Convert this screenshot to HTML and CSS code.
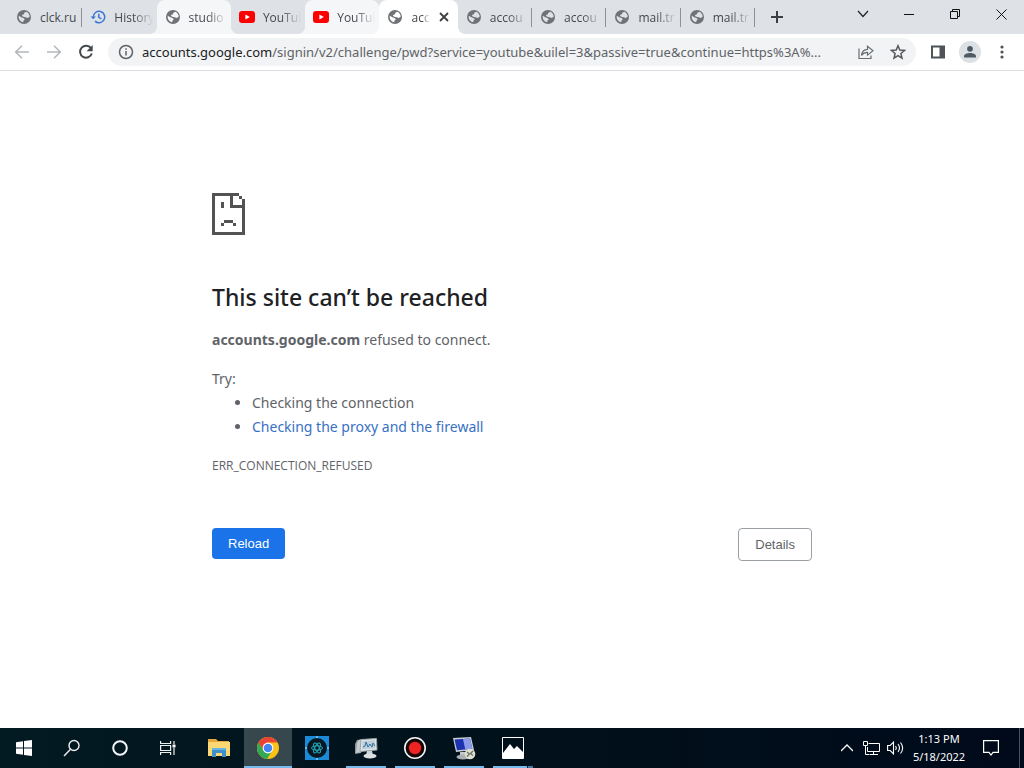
FILE: index.html
```
<!doctype html>
<html lang="en">
<head>
	<meta charset="UTF-8">
	<title>accounts.google.com</title>
	<link rel="stylesheet" href="styles.css">
</head>
<body>
	<!-- shared icons -->
	<svg class="defs" width="0" height="0">
		<symbol id="globe" viewBox="0 0 24 24">
			<path fill="#6f7276" d="M12 1.500a10.500 10.500 0 1 0 0 21 10.500 10.500 0 0 0 0-21zM11 19.930c-3.950-.490-7-3.850-7-7.930 0-.620.080-1.210.210-1.790L8 12.500l4 1.500 1 2-2 1.800zM17.500 13.500l-3-1-2.500-.5-3-1.500.5-2 2.500-.5.5-2.500 3-1.400c2.930 1.190 5 4.060 5 7.400z"/>
		</symbol>
		<symbol id="youtube" viewBox="0 0 16 16">
			<rect x="0" y="2" width="16" height="12" rx="3" fill="#f00"/>
			<path fill="#fff" d="M6.400 5.400v5.200l4.500-2.600z"/>
		</symbol>
	</svg>

	<header class="browser">
		<div class="top">
			<nav class="tabs">
				<a class="tab" href="#"><svg class="fav"><use href="#globe"/></svg><span>clck.ru</span></a>
				<a class="tab no-line" href="#">
					<svg class="fav" viewBox="0 0 16 16" fill="none" stroke="#3b78d8" stroke-width="1.500"><path d="M3.300 8a5.700 5.700 0 1 1 1.700 4.100M8.800 4.800v3.600l2.600 1.500"/><path fill="#3b78d8" stroke="none" d="M.5 7.400h5.400L3.200 10.300z"/></svg>
					<span>History</span>
				</a>
				<a class="tab picked" href="#"><svg class="fav"><use href="#globe"/></svg><span>studio</span></a>
				<a class="tab no-line" href="#"><svg class="fav"><use href="#youtube"/></svg><span>YouTub</span></a>
				<a class="tab picked" href="#"><svg class="fav"><use href="#youtube"/></svg><span>YouTub</span></a>
				<div class="tab current">
					<svg class="fav"><use href="#globe"/></svg><span>acc</span>
					<button class="close" aria-label="Close tab"><svg width="10" height="10" viewBox="0 0 10 10" stroke="#3c4043" stroke-width="1.800"><path d="M1 1l8 8M9 1L1 9"/></svg></button>
				</div>
				<a class="tab" href="#"><svg class="fav"><use href="#globe"/></svg><span>accou</span></a>
				<a class="tab" href="#"><svg class="fav"><use href="#globe"/></svg><span>accou</span></a>
				<a class="tab" href="#"><svg class="fav"><use href="#globe"/></svg><span>mail.tr</span></a>
				<a class="tab" href="#"><svg class="fav"><use href="#globe"/></svg><span>mail.tr</span></a>
			</nav>
			<button class="new-tab" aria-label="New tab"><svg width="12" height="12" viewBox="0 0 12 12" stroke="#3c4043" stroke-width="2"><path d="M6 0v12M0 6h12"/></svg></button>
			<div class="controls">
				<button aria-label="Search tabs"><svg width="12" height="12" viewBox="0 0 12 12" fill="none" stroke="#222" stroke-width="1.200"><path d="M1 3l5 5.500L11 3"/></svg></button>
				<button aria-label="Minimize"><svg width="10" height="10" viewBox="0 0 10 10"><path fill="#111" d="M0 5h10v1H0z"/></svg></button>
				<button aria-label="Restore"><svg width="10" height="10" viewBox="0 0 10 10" fill="none" stroke="#111"><path d="M.5 2.500h7v7h-7zM2.500 2.500v-2h7v7h-2"/></svg></button>
				<button aria-label="Close"><svg width="11" height="11" viewBox="0 0 11 11" stroke="#111"><path d="M.5.5l10 10M10.500.5l-10 10"/></svg></button>
			</div>
		</div>

		<div class="toolbar">
			<button aria-label="Back"><svg width="16" height="16" viewBox="0 0 16 16" fill="none" stroke="#b5b8bb" stroke-width="1.600"><path d="M15 8H2M8 1.700 1.700 8 8 14.300"/></svg></button>
			<button aria-label="Forward"><svg width="16" height="16" viewBox="0 0 16 16" fill="none" stroke="#b5b8bb" stroke-width="1.600"><path d="M1 8h13M8 1.700 14.300 8 8 14.300"/></svg></button>
			<button aria-label="Reload page"><svg width="16" height="16" viewBox="0 0 16 16" fill="none" stroke="#45494d" stroke-width="2"><path d="M13 4.200A6 6 0 1 0 13.800 9.500"/><path fill="#45494d" stroke="none" d="M14.700 1v6.200H8.500z"/></svg></button>
			<div class="address">
				<svg width="16" height="16" viewBox="0 0 16 16" fill="none" stroke="#5f6368" stroke-width="1.500"><circle cx="8" cy="8" r="6.500"/><path d="M8 7v4.600M8 4.300v1.500"/></svg>
				<div class="url"><b>accounts.google.com</b>/signin/v2/challenge/pwd?service=youtube&amp;uilel=3&amp;passive=true&amp;continue=https%3A%...</div>
				<button aria-label="Share"><svg width="16" height="16" viewBox="0 0 16 16" fill="none" stroke="#6a6e73" stroke-width="1.200"><path d="M1 4.500v10h12v-3M3.500 11.500c.4-4 2.600-6 6-6.200V2.200L15 6.700l-5.500 4.400V8.300c-2.600 0-4.400.8-6 3.200z"/></svg></button>
				<button aria-label="Bookmark"><svg width="16" height="16" viewBox="0 0 16 16" fill="none" stroke="#55595e" stroke-width="1.500"><path d="M8 1.800l1.800 4.300 4.700.4-3.600 3 1.100 4.600L8 11.700l-4 2.400 1.100-4.600-3.600-3 4.700-.4z"/></svg></button>
			</div>
			<button aria-label="Side panel"><svg width="16" height="16" viewBox="0 0 16 16"><path fill="#505357" d="M1 1.500h14v13H1zM3 3.500v9h6.500v-9z" fill-rule="evenodd"/></svg></button>
			<button aria-label="Profile"><svg width="22" height="22" viewBox="0 0 22 22"><circle cx="11" cy="11" r="11" fill="#dce1e6"/><circle cx="11" cy="7.800" r="2.900" fill="#4d5963"/><path fill="#4d5963" d="M5 16.500v-1.300c0-2.200 3.500-3.300 6-3.300s6 1.100 6 3.300v1.300z"/></svg></button>
			<button aria-label="Menu"><svg width="16" height="16" viewBox="0 0 16 16" fill="#505357"><circle cx="8" cy="3" r="1.600"/><circle cx="8" cy="8" r="1.600"/><circle cx="8" cy="13" r="1.600"/></svg></button>
		</div>
	</header>

	<main class="error">
		<svg class="sad" width="33" height="42" viewBox="0 0 11 14" fill="#535353" shape-rendering="crispEdges">
			<path d="M0 0h9v1H7v3h4v10H0zM1 1v12h9V5H6V1zM9 1h1v1H9zM10 2h1v2h-1zM3 3h1v2H3zM4 9h3v1H4zM3 10h1v1H3zM7 10h1v1H7z" fill-rule="evenodd"/>
		</svg>
		<h1>This site can’t be reached</h1>
		<p><strong>accounts.google.com</strong> refused to connect.</p>
		<div class="suggest">
			<p>Try:</p>
			<ul>
				<li>Checking the connection</li>
				<li><a href="#">Checking the proxy and the firewall</a></li>
			</ul>
		</div>
		<div class="code">ERR_CONNECTION_REFUSED</div>
		<div class="actions">
			<button class="reload">Reload</button>
			<button class="details">Details</button>
		</div>
	</main>

	<footer class="taskbar">
		<div class="system">
			<button aria-label="Start"><svg width="16" height="16" viewBox="0 0 16 16" fill="#fff"><path d="M0 2.200 7 1.200v6.300H0zM8 1l8-1v7.500H8zM0 8.500h7v6.300l-7-1zM8 8.500h8V16l-8-1z"/></svg></button>
			<button aria-label="Search"><svg width="18" height="18" viewBox="0 0 18 18" fill="none" stroke="#eee" stroke-width="1.400"><circle cx="11" cy="6.500" r="5"/><path d="M7.500 10.200 1 17"/></svg></button>
			<button aria-label="Cortana"><svg width="18" height="18" viewBox="0 0 18 18" fill="none" stroke="#f2f6f7" stroke-width="2"><circle cx="9" cy="9" r="6.800"/></svg></button>
			<button aria-label="Task view"><svg width="16" height="16" viewBox="0 0 16 16" fill="none" stroke="#eee" stroke-width="1.200"><path d="M.6 1v2.500h10V1M.6 15v-2.500h10V15M.6 5.500h10v5H.6zM14 1v3M14 8v7"/><path fill="#fff" stroke="none" d="M12.500 4.500h3v3h-3z"/></svg></button>
		</div>
		<div class="apps">
			<button aria-label="File Explorer"><svg width="22" height="20" viewBox="0 0 22 20"><path fill="#e3a93c" d="M0 1h8l2 2h11v5H0z"/><path fill="#fbd873" d="M0 4h22v14H0z"/><path fill="#3f8fcb" d="M4 10h14v9h-4v-4H8v4H4z"/><path fill="#64b5e6" d="M4 10h14v2H4z"/></svg></button>
			<button class="open front" aria-label="Google Chrome"><svg width="24" height="24" viewBox="0 0 24 24"><circle cx="12" cy="12" r="11" fill="#fbc116"/><path fill="#34a853" d="M2.500 6.500A11 11 0 0 0 11 23l5.300-8.500L12 17l-4.300-2.500z"/><path fill="#ea4335" d="M2.500 6.500a11 11 0 0 1 19 0H12L7.700 14.500z"/><circle cx="12" cy="12" r="5.400" fill="#fff"/><circle cx="12" cy="12" r="4.300" fill="#4285f4"/></svg></button>
			<button aria-label="Atom"><svg width="24" height="24" viewBox="0 0 24 24"><path fill="#1b8bd8" d="M0 0h24v24H0z"/><path stroke="#c5e8fa" d="M12 0v24M0 12h24"/><circle cx="12" cy="12" r="10" fill="#071822"/><g fill="none" stroke="#27a5b5"><ellipse cx="12" cy="12" rx="5.500" ry="2.200"/><ellipse cx="12" cy="12" rx="5.500" ry="2.200" transform="rotate(60 12 12)"/><ellipse cx="12" cy="12" rx="5.500" ry="2.200" transform="rotate(120 12 12)"/></g></svg></button>
			<button class="open" aria-label="Monitor"><svg width="24" height="24" viewBox="0 0 24 24"><path fill="#8d9799" d="M1 8 3 4l6-1-2 14-6 1z"/><path fill="#c3cccf" d="M3 7 5 4l4-1-1 13-6 1z"/><path fill="#e3e9eb" stroke="#98a2a5" d="M7 3.500 22.500 2.500 23 14 6 15.500z"/><path fill="#bccfdb" d="M8.500 5 21 4.200l.4 8.300L8 13.500z"/><path fill="none" stroke="#346f9c" d="M9 11l2-1 1-4 2 5 2-3 2 3 1-4 2 3"/><path fill="#ced5d7" d="M13 15h5l1 4h-7z"/><ellipse cx="16" cy="20" rx="6.500" ry="2.500" fill="#dce0e1"/></svg></button>
			<button class="open" aria-label="Recorder"><svg width="24" height="24" viewBox="0 0 24 24"><circle cx="12" cy="12" r="10.200" fill="#170607" stroke="#f5f5f5" stroke-width="1.600"/><circle cx="12" cy="12" r="6.200" fill="#f02323"/></svg></button>
			<button class="open" aria-label="Remote Desktop"><svg width="24" height="24" viewBox="0 0 24 24"><path fill="#c8cdd2" d="M1 2l18-1 3 13L4 16z"/><path fill="#1d32ae" d="M2.500 3.500 18 2.500l2.300 10.300L5 14.300z"/><path fill="#8e9bea" d="M11 3l7-.5 2.300 10.300-7 .7z"/><path fill="#c5cacb" d="M8 16h6v4H8z"/><ellipse cx="11" cy="21" rx="6.500" ry="2.500" fill="#a9b0b3"/><circle cx="18" cy="18" r="5.300" fill="#dfdfd0"/><path fill="none" stroke="#69736a" stroke-width="1.300" d="M15 16l2.500 2-2.500 2.500M21 15l-2.500 2.500 2.500 2"/></svg></button>
			<button class="open several" aria-label="Photos"><svg width="22" height="22" viewBox="0 0 22 22"><path fill="none" stroke="#fff" d="M.5.5h21v21H.5z"/><path fill="#fff" d="M1 16l7-9 4 5 3-3 6 6v6H1z"/></svg></button>
		</div>
		<div class="tray">
			<button aria-label="Show hidden icons"><svg width="12" height="12" viewBox="0 0 12 12" fill="none" stroke="#fff" stroke-width="1.300"><path d="M0 9l6-6 6 6"/></svg></button>
			<button aria-label="Network"><svg width="17" height="16" viewBox="0 0 17 16" fill="none" stroke="#fff"><path d="M5.500 3.500h11v8h-12V7M7 14.500h8M10.500 11.500v3M.5 1.500h4v4h-4zM2.500 5.500v9h4"/></svg></button>
			<button aria-label="Volume"><svg width="17" height="16" viewBox="0 0 17 16" fill="none" stroke="#fff" stroke-width="1.100"><path d="M.6 5.500v5h2.600l3.300 3.300V2.200L3.200 5.500zM8.500 6q1.500 2 0 4M11 4q3 4 0 8M13.500 2.500q4.300 5.500 0 11"/></svg></button>
			<div class="clock"><time>1:13 PM</time><time>5/18/2022</time></div>
			<button class="notes" aria-label="Notifications"><svg width="16" height="16" viewBox="0 0 16 16" fill="none" stroke="#fff" stroke-width="1.200"><path d="M.6.6h14.800v11.800H10L8 15l-2-2.600H.6z"/></svg></button>
			<button class="desktop" aria-label="Show desktop"></button>
		</div>
	</footer>
</body>
</html>
```
FILE: styles.css
```
*{margin:0;
  padding:0;
  box-sizing:border-box;}
body{display:flex;
     flex-direction:column;
     min-height:100vh;
     background:#fff;
     color:#5f6368;
     font-family:"Noto Sans","Open Sans",sans-serif;
     font-size:14px;}
button{display:flex;
       align-items:center;
       justify-content:center;
       border:0;
       background:none;
       color:inherit;
       font:inherit;
       cursor:pointer;}
svg{flex:none;}
.defs{position:absolute;}

/* tab strip */
.top{display:flex;
     height:34px;
     padding-left:8px;
     background:#dee1e6;}
.tabs{display:flex;
      flex:1;
      min-width:0;}
.tab{position:relative;
     display:flex;
     flex:1 1 0;
     align-items:center;
     gap:8px;
     min-width:0;
     padding:0 4px 0 8px;
     color:#45494d;
     font-family:"Open Sans",sans-serif;
     font-size:12px;
     text-decoration:none;}
.tab::after{content:"";
            position:absolute;
            right:0;
            top:8px;
            width:1px;
            height:19px;
            background:#8d9094;}
.tab.no-line::after{display:none;}
.fav{width:16px;
     height:16px;}
.tab span{flex:1;
          min-width:0;
          overflow:hidden;
          white-space:nowrap;
          -webkit-mask-image:linear-gradient(to left,transparent,#000 20px);
          mask-image:linear-gradient(to left,transparent,#000 20px);}
.tab:first-child span{-webkit-mask-image:none;
                      mask-image:none;}
.picked,.current{--fill:#f5f6f8;
                 z-index:1;
                 background:var(--fill);
                 border-radius:8px 8px 0 0;}
.current{--fill:#fff;
         z-index:2;
         padding-right:8px;}
.tab.current span{-webkit-mask-image:linear-gradient(to left,transparent,#000 8px);
                  mask-image:linear-gradient(to left,transparent,#000 8px);}
.picked::before,.current::before,
.picked::after,.current::after{content:"";
                               position:absolute;
                               top:auto;
                               bottom:0;
                               width:8px;
                               height:8px;}
.picked::before,.current::before{left:-8px;
                                 background:radial-gradient(circle at 0 0,transparent 8px,var(--fill) 8px);}
.picked::after,.current::after{right:-8px;
                               background:radial-gradient(circle at 100% 0,transparent 8px,var(--fill) 8px);}
.close{width:12px;
       height:16px;}
.new-tab{width:44px;}
.controls{display:flex;
          height:28px;
          margin-left:41px;}
.controls button{width:46px;}

/* toolbar */
.toolbar{display:flex;
         align-items:center;
         height:37px;
         padding:0 6px;
         border-bottom:1px solid #dadce0;}
.toolbar button{width:32px;
                height:28px;}
.address{display:flex;
         flex:1;
         align-items:center;
         min-width:0;
         height:28px;
         margin:0 6px;
         padding:0 2px 0 10px;
         border-radius:14px;
         background:#f1f3f4;}
.url{flex:1;
     min-width:0;
     margin-left:8px;
     overflow:hidden;
     font-size:13px;
     white-space:nowrap;}
.url b{color:#202124;
       font-weight:400;}

/* error page */
.error{flex:1;
       width:100%;
       max-width:600px;
       margin:0 auto;
       padding-top:122px;
       line-height:24px;}
.sad{display:block;}
.error h1{margin:46px 0 15px;
          color:#202124;
          font-size:23px;
          font-weight:500;
          line-height:32px;}
.suggest{margin-top:15px;}
.suggest ul{padding-left:40px;}
.suggest a{color:#3871c4;
           text-decoration:none;}
.code{margin-top:15px;
      font-family:"Open Sans",sans-serif;
      font-size:12px;}
.actions{display:flex;
         justify-content:space-between;
         margin-top:50px;}
.actions button{border-radius:4px;
                padding:0 16px;
                font-family:"Liberation Sans",Arial,sans-serif;
                font-size:13px;}
.actions .reload{height:31px;
                 background:#1a73e8;
                 color:#fff;}
.actions .details{height:33px;
                  border:1px solid #9aa0a6;}

/* taskbar */
.taskbar{display:flex;
         height:40px;
         background:linear-gradient(to right,#021a22,#010f1a 60%,#000a1b);}
.system,.apps,.tray{display:flex;}
.system button,.apps button{width:48px;
                            height:40px;}
.apps{gap:1px;
      margin-left:3px;}
.apps button{position:relative;}
.apps .front{background:#37474e;}
.open::after{content:"";
             position:absolute;
             left:4px;
             right:4px;
             bottom:0;
             height:2px;
             background:#76b9ed;}
.front::after{left:0;
              right:0;}
.several::after{background:linear-gradient(to right,#76b9ed 34px,#0b2230 34px,#0b2230 35px,#4d7b9e 35px);}
.tray{margin-left:auto;
      color:#fff;}
.tray button{width:24px;}
.clock{display:flex;
       flex-direction:column;
       justify-content:center;
       width:64px;
       font-size:11px;
       line-height:18px;
       text-align:center;}
.tray .notes{width:40px;}
.tray .desktop{width:5px;
               margin-left:8px;
               border-left:1px solid #46525e;}
```
